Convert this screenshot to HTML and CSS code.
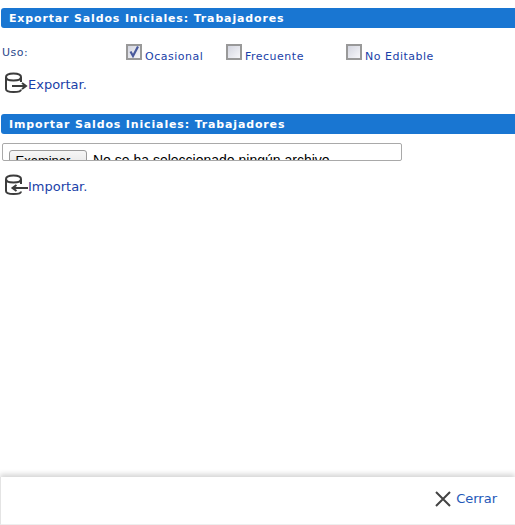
FILE: index.html
```html
<!DOCTYPE html>
<html lang="es">

<head>
    <meta charset="UTF-8">
    <meta name="viewport" content="width=device-width, initial-scale=1.0">
    <title>Saldos Iniciales: Trabajadores</title>
    <link rel="stylesheet" href="styles.css">
</head>

<body>
    <div class="page">
        <main class="content">
            <h2 class="section-title">Exportar Saldos Iniciales: Trabajadores</h2>

            <div class="uso-row">
                <span class="uso-label">Uso:</span>
                <label class="check check-first">
                    <span class="check-box">
                        <svg viewBox="0 0 12 12" width="12" height="12">
                            <path d="M2.5 5.5 L5 10 L10 0.5" fill="none" stroke="#4a5a9c" stroke-width="2.2" />
                        </svg>
                    </span>
                    <span class="check-text">Ocasional</span>
                </label>
                <label class="check check-second">
                    <span class="check-box"></span>
                    <span class="check-text">Frecuente</span>
                </label>
                <label class="check">
                    <span class="check-box"></span>
                    <span class="check-text">No Editable</span>
                </label>
            </div>

            <a class="action action-export" href="#">
                <svg class="db-icon" viewBox="0 0 24 22" width="24" height="22">
                    <path d="M2 5 C2 2.5 5 1.5 9.5 1.5 C14 1.5 17 2.5 17 5 C17 7.5 14 8.5 9.5 8.5 C5 8.5 2 7.5 2 5 Z" fill="none" stroke="#3c3c3c" stroke-width="2" />
                    <path d="M2 5 V17 C2 19.3 4.5 20 9.5 20 C14 20 17 19.3 17 17.5 M17 5 V10" fill="none" stroke="#3c3c3c" stroke-width="2" />
                    <path d="M8 14 H21 M18 11 L22 14 L18 17" fill="none" stroke="#3c3c3c" stroke-width="2" />
                </svg>
                <span>Exportar.</span>
            </a>

            <h2 class="section-title section-import">Importar Saldos Iniciales: Trabajadores</h2>

            <div class="file-field">
                <span class="file-button">Examinar...</span>
                <span class="file-name">No se ha seleccionado ningún archivo.</span>
            </div>

            <a class="action action-import" href="#">
                <svg class="db-icon" viewBox="0 0 24 22" width="24" height="22">
                    <path d="M2 5 C2 2.5 5 1.5 9.5 1.5 C14 1.5 17 2.5 17 5 C17 7.5 14 8.5 9.5 8.5 C5 8.5 2 7.5 2 5 Z" fill="none" stroke="#3c3c3c" stroke-width="2" />
                    <path d="M2 5 V17 C2 19.3 4.5 20 9.5 20 C14 20 17 19.3 17 17.5 M17 5 V10" fill="none" stroke="#3c3c3c" stroke-width="2" />
                    <path d="M24 14 H9 M12.5 11 L8.5 14 L12.5 17" fill="none" stroke="#3c3c3c" stroke-width="2" />
                </svg>
                <span>Importar.</span>
            </a>
        </main>

        <footer class="footer">
            <a class="close-link" href="#">
                <svg viewBox="0 0 16 16" width="16" height="16">
                    <path d="M1 1 L15 15 M15 1 L1 15" fill="none" stroke="#444" stroke-width="2" />
                </svg>
                <span>Cerrar</span>
            </a>
        </footer>
    </div>
</body>

</html>
```

FILE: styles.css
```css
* {
    margin: 0;
    padding: 0;
    box-sizing: border-box;
}

html,
body {
    height: 100%;
    overflow: hidden;
}

body {
    font-family: "DejaVu Sans", Verdana, sans-serif;
    font-size: 11px;
    color: #1a3fa8;
    background-color: #fff;
}

a {
    color: #1a3fa8;
    text-decoration: none;
}

.page {
    height: 525px;
    display: flex;
    flex-direction: column;
}

.content {
    flex: 1;
    padding: 8px 0 0 1px;
}

.section-title {
    height: 20px;
    padding-left: 8px;
    font-size: 11px;
    line-height: 21px;
    font-weight: bold;
    letter-spacing: 0.85px;
    color: #fff;
    background-color: #1976d2;
    border-radius: 3px 0 0 3px;
}

.uso-row {
    display: flex;
    align-items: flex-start;
    height: 36px;
    padding: 16px 0 0 1px;
}

.uso-label {
    width: 124px;
    margin-top: 1px;
    line-height: 16px;
    letter-spacing: 0.5px;
    color: #2b4a8c;
}

.check {
    display: flex;
    align-items: flex-start;
    gap: 3px;
}

.check-first {
    width: 100px;
}

.check-second {
    width: 120px;
}

.check-box {
    width: 16px;
    height: 16px;
    border: 2px solid #999;
    background: linear-gradient(135deg, #d4d6e0, #f6f6f9);
}

.check-box svg {
    display: block;
}

.check-text {
    margin-top: 5px;
    line-height: 16px;
    letter-spacing: 0.5px;
}

.action {
    display: flex;
    align-items: center;
    font-size: 13px;
}

.action-export {
    height: 24px;
    margin: 8px 0 0 3px;
    width: fit-content;
}

.action-import {
    height: 24px;
    margin: 13px 0 0 3px;
    width: fit-content;
}

.db-icon {
    flex: none;
    margin-bottom: 3px;
}

.section-import {
    margin-top: 18px;
}

.file-field {
    width: 400px;
    height: 18px;
    margin: 9px 0 0 1px;
    padding: 6px 0 0 6px;
    display: flex;
    gap: 6px;
    overflow: hidden;
    border: 1px solid #a9a9a9;
    border-radius: 2px;
    background-color: #fff;
    font-family: "Liberation Sans", Arial, sans-serif;
    font-size: 14px;
    color: #000;
}

.file-button {
    flex: none;
    width: 78px;
    height: 24px;
    text-align: center;
    line-height: 20px;
    font-size: 13px;
    border: 1px solid #9a9a9a;
    border-radius: 3px;
    background: linear-gradient(#f6f6f6, #dedede);
}

.file-name {
    line-height: 21px;
    white-space: nowrap;
}

.footer {
    height: 48px;
    display: flex;
    align-items: center;
    justify-content: flex-end;
    padding: 0 18px 4px 0;
    border-left: 1px solid #e4e4e4;
    border-bottom: 1px solid #eee;
    box-shadow: 0 -3px 5px rgba(0, 0, 0, 0.16);
}

.close-link {
    display: flex;
    align-items: center;
    gap: 5px;
    font-size: 13px;
    color: #2358b8;
}
```
